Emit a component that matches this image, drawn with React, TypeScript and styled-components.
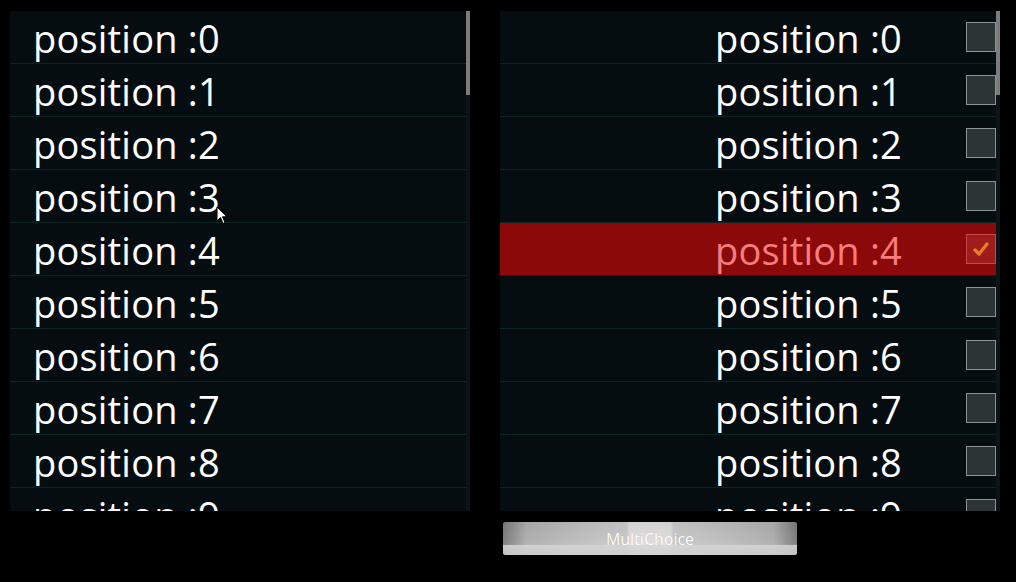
import React from "react";
import styled, { createGlobalStyle } from "styled-components";

const Global = createGlobalStyle`
  html, body { margin: 0; padding: 0; background: #000; }
  body { width: 1016px; height: 582px; overflow: hidden; font-family: "Open Sans", "Noto Sans", sans-serif; }
`;

const Screen = styled.div`
  position: relative;
  width: 1016px;
  height: 582px;
  background: #000;
  display: flex;
  flex-direction: column;
  padding: 11px 0 0 10px;
  box-sizing: border-box;
`;

const Panels = styled.div`
  display: flex;
  gap: 30px;
  height: 500px;
`;

const Panel = styled.div<{ $w: number }>`
  position: relative;
  width: ${(p) => p.$w}px;
  height: 500px;
  background: #050d10;
  overflow: hidden;
`;

const Row = styled.div<{ $right?: boolean; $sel?: boolean }>`
  height: 52px;
  border-bottom: 1px solid #0f2620;
  display: flex;
  align-items: center;
  justify-content: ${(p) => (p.$right ? "flex-end" : "flex-start")};
  padding: ${(p) => (p.$right ? "0 4px 0 0" : "0 0 0 23px")};
  background: ${(p) => (p.$sel ? "#8b0909" : "transparent")};
  gap: 64px;
`;

const Label = styled.span<{ $sel?: boolean }>`
  font-family: "Open Sans", "Noto Sans", sans-serif;
  font-size: 38px;
  line-height: 52px;
  padding-top: 2px;
  color: ${(p) => (p.$sel ? "#f57d7d" : "#ffffff")};
  white-space: nowrap;
  letter-spacing: 0.2px;
`;

const Check = styled.div<{ $on?: boolean }>`
  width: 28px;
  height: 28px;
  border: 1px solid ${(p) => (p.$on ? "#c54848" : "#8a9494")};
  background: ${(p) => (p.$on ? "#9e1c1c" : "#2b3535")};
  display: flex;
  align-items: center;
  justify-content: center;
  flex: none;
`;

const ScrollThumb = styled.div`
  position: absolute;
  right: 0;
  top: 0;
  width: 4px;
  height: 84px;
  background: #7c7c7c;
`;

const ScrollTrack = styled.div`
  position: absolute;
  right: 0;
  top: 0;
  width: 4px;
  height: 100%;
  background: #0c1416;
`;

const ButtonRow = styled.div`
  display: flex;
  padding: 11px 0 0 493px;
`;

const Button = styled.div`
  width: 294px;
  height: 33px;
  display: flex;
  align-items: center;
  justify-content: center;
  color: #ffffff;
  font-family: "Open Sans", "Noto Sans", sans-serif;
  font-size: 16px;
  border-radius: 2px;
  background:
    linear-gradient(180deg, rgba(255,255,255,0) 0%, rgba(255,255,255,0) 68%, rgba(214,214,214,0.85) 70%, rgba(206,206,206,0.85) 100%),
    linear-gradient(180deg, rgba(0,0,0,0.08) 0%, rgba(255,255,255,0.05) 100%),
    linear-gradient(90deg, #7e7e7e 0%, #b4b4b4 8%, #c8c8c8 30%, #cfcfcf 42%, #e4e4e4 43%, #e4e4e4 57%, #cfcfcf 58%, #c8c8c8 70%, #b4b4b4 92%, #7e7e7e 100%);
  text-shadow: 0 0 1px rgba(0,0,0,0.2);
`;

const Cursor = styled.svg`
  position: absolute;
  left: 216px;
  top: 206px;
`;

const rows = Array.from({ length: 10 }, (_, i) => i);

export default function App() {
  return (
    <>
      <Global />
      <Screen>
        <Panels>
          <Panel $w={460}>
            {rows.map((i) => (
              <Row key={i}>
                <Label>position :{i}</Label>
              </Row>
            ))}
            <ScrollTrack />
            <ScrollThumb />
          </Panel>
          <Panel $w={500}>
            {rows.map((i) => (
              <Row key={i} $right $sel={i === 4}>
                <Label $sel={i === 4}>position :{i}</Label>
                <Check $on={i === 4}>
                  {i === 4 && (
                    <svg width="18" height="16" viewBox="0 0 18 16">
                      <path d="M3 9 L7 13 L15 3" stroke="#e8801e" strokeWidth="3.2" fill="none" strokeLinecap="round" strokeLinejoin="round" />
                    </svg>
                  )}
                </Check>
              </Row>
            ))}
            <ScrollTrack />
            <ScrollThumb />
          </Panel>
        </Panels>
        <ButtonRow>
          <Button>MultiChoice</Button>
        </ButtonRow>
        <Cursor width="12" height="20" viewBox="0 0 12 20">
          <path d="M1 1 L1 15 L4.5 11.5 L7 17.5 L9 16.5 L6.5 10.8 L11 10.8 Z" fill="#fff" stroke="#000" strokeWidth="1" />
        </Cursor>
      </Screen>
    </>
  );
}
